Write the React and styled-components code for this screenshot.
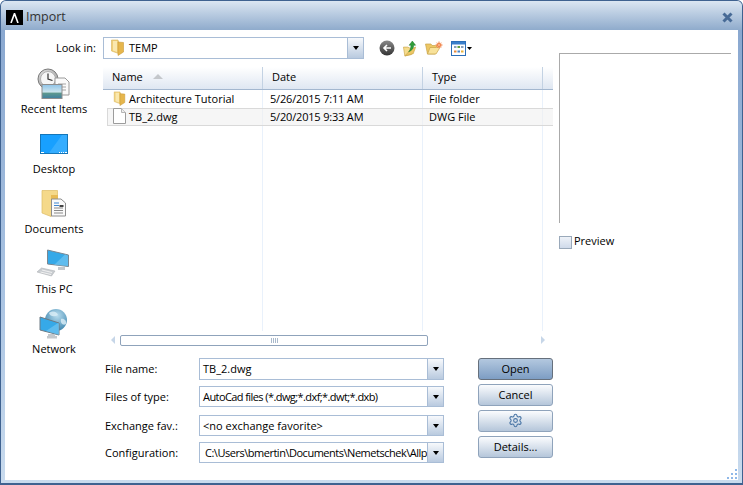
import styled, { createGlobalStyle } from 'styled-components'
import { Settings } from 'lucide-react'

const Global = createGlobalStyle`
  html, body { margin: 0; padding: 0; background: #fff; }
  body { font-family: "Open Sans", "Noto Sans", sans-serif; font-size: 11px; color: #000; }
`
const Window = styled.div`
  position: relative;
  box-sizing: border-box;
  width: 743px;
  height: 485px;
  display: flex;
  flex-direction: column;
  overflow: hidden;
  border: 1px solid #3f6290;
  border-bottom: 2px solid #3f6290;
  border-radius: 6px 6px 0 0;
  background: linear-gradient(#8fabcc 0, #8aa8d0 30px, #a9c3e2 60%, #c9dbee 100%);
`
const TitleBar = styled.div`
  flex: 0 0 29px;
  display: flex;
  align-items: center;
  padding: 0 9px 0 5px;
  background: linear-gradient(#dbe6f2, #8fabcc);
`
const Logo = styled.div`
  width: 17px;
  height: 15px;
  margin-top: 4px;
  background: #000;
  color: #fff;
  display: flex;
  align-items: center;
  justify-content: center;
`
const Title = styled.div`
  margin: 1px 0 0 3px;
  font-size: 12.5px;
  color: #333;
  flex: 1;
`
const Client = styled.div`
  flex: 1;
  min-height: 0;
  margin: 0 4px 3px;
  background: #fff;
  display: flex;
`
const LeftArea = styled.div`
  width: 548px;
  display: flex;
  flex-direction: column;
`
const LookRow = styled.div`
  display: flex;
  align-items: center;
  padding-top: 7px;
  height: 22px;
`
const LookLabel = styled.div`
  width: 91px;
  margin-right: 7px;
  padding-bottom: 2px;
  text-align: right;
`
const Combo = styled.div`
  box-sizing: border-box;
  height: ${(p) => p.$h || 22}px;
  width: ${(p) => p.$w}px;
  display: flex;
  align-items: stretch;
  border: 1px solid #a9bdd6;
  background: #fff;
`
const ComboValue = styled.div`
  flex: 1;
  min-width: 0;
  display: flex;
  align-items: center;
  gap: 5px;
  padding-left: ${(p) => p.$pad || 3}px;
  padding-bottom: 1px;
  letter-spacing: ${(p) => p.$track || 0}px;
  overflow: hidden;
  white-space: nowrap;
`
const DropButton = styled.div`
  flex: 0 0 15px;
  border-left: 1px solid #a9bdd6;
  background: linear-gradient(#f7f9fc, #b9cadf);
  display: flex;
  align-items: center;
  justify-content: center;
`
const Caret = styled.span`
  width: 0;
  height: 0;
  border-left: 3.5px solid transparent;
  border-right: 3.5px solid transparent;
  border-top: 4px solid #000;
`
const Tools = styled.div`
  display: flex;
  align-items: center;
  margin-left: 15px;
  gap: 8px;
`
const Middle = styled.div`
  display: flex;
  height: 280px;
  margin-top: 8px;
`
const Sidebar = styled.div`
  width: 98px;
  display: flex;
  flex-direction: column;
`
const Place = styled.div`
  flex: 0 0 60px;
  display: flex;
  flex-direction: column;
  align-items: center;
`
const PlaceIcon = styled.div`
  height: 34px;
  width: 40px;
  display: flex;
  align-items: center;
  justify-content: center;
`
const PlaceLabel = styled.div`
  line-height: 16px;
`
const ListColumn = styled.div`
  width: 450px;
`
const ListHead = styled.div`
  height: 22px;
  display: flex;
  border-bottom: 1px solid #a3b7cf;
  background: linear-gradient(#fff, #dfe7f2);
`
const HeadCell = styled.div`
  box-sizing: border-box;
  width: ${(p) => p.$w}px;
  display: flex;
  align-items: center;
  gap: 9px;
  padding-left: ${(p) => p.$pad}px;
  padding-bottom: 3px;
  border-right: ${(p) => (p.$last ? 'none' : '1px solid #c3d2e3')};
`
const SortArrow = styled.span`
  width: 0;
  height: 0;
  margin-left: 1px;
  border-left: 5px solid transparent;
  border-right: 5px solid transparent;
  border-bottom: 5px solid #c4c7cb;
`
const ListBody = styled.div`
  height: 241px;
  background:
    linear-gradient(#e9f1fb, #e9f1fb) 159px 0 / 1px 100% no-repeat,
    linear-gradient(#e9f1fb, #e9f1fb) 319px 0 / 1px 100% no-repeat,
    linear-gradient(#e9f1fb, #e9f1fb) 439px 0 / 1px 100% no-repeat;
`
const Row = styled.div`
  box-sizing: border-box;
  height: 18px;
  padding-bottom: 2px;
  display: flex;
  align-items: center;
  margin-left: ${(p) => (p.$selected ? 4 : 0)}px;
  border: 1px solid ${(p) => (p.$selected ? '#d9d9d9' : 'transparent')};
  border-right: none;
  background: ${(p) => (p.$selected ? 'rgba(240,240,240,.6)' : 'transparent')};
`
const NameCell = styled.div`
  width: ${(p) => (p.$selected ? 154 : 158)}px;
  display: flex;
  align-items: center;
  gap: 3px;
  padding-left: ${(p) => (p.$selected ? 5 : 9)}px;
  box-sizing: border-box;
`
const DateCell = styled.div`
  width: 160px;
  padding-left: 8px;
  box-sizing: border-box;
  letter-spacing: -0.18px;
`
const TypeCell = styled.div`
  padding-left: 7px;
`
const ScrollRow = styled.div`
  height: 14px;
  margin-top: 2px;
  display: flex;
  align-items: center;
`
const ScrollArrow = styled.span`
  width: 0;
  height: 0;
  margin-left: ${(p) => p.$ml}px;
  border-top: 4px solid transparent;
  border-bottom: 4px solid transparent;
  ${(p) => (p.$right ? 'border-left: 4px solid #c6d6e8;' : 'border-right: 4px solid #c6d6e8;')}
`
const Thumb = styled.div`
  box-sizing: border-box;
  width: 308px;
  height: 11px;
  margin-left: 5px;
  border: 1px solid #8fa3bb;
  border-radius: 2px;
  display: flex;
  align-items: center;
  justify-content: center;
  gap: 1px;
`
const ThumbLine = styled.span`
  width: 1px;
  height: 5px;
  background: #a9b9cc;
`
const Bottom = styled.div`
  display: flex;
  margin-top: 11px;
  padding-left: 100px;
`
const Form = styled.div`
  width: 339px;
`
const FormRow = styled.div`
  display: flex;
  align-items: center;
  margin-top: ${(p) => p.$top || 0}px;
`
const FieldLabel = styled.div`
  width: 94px;
  flex: none;
  padding-bottom: 1px;
`
const Buttons = styled.div`
  margin-left: 34px;
  display: flex;
  flex-direction: column;
  gap: 4px;
`
const Button = styled.div`
  box-sizing: border-box;
  width: 75px;
  height: 22px;
  padding-bottom: 1px;
  display: flex;
  align-items: center;
  justify-content: center;
  border-radius: 3px;
  border: 1px solid ${(p) => (p.$primary ? '#66707c' : '#8fa3bb')};
  background: ${(p) =>
    p.$primary ? 'linear-gradient(#b3c8df, #7d9dc3)' : 'linear-gradient(#fbfcfe, #b5c6da)'};
`
const PreviewColumn = styled.div`
  padding: 23px 0 0 6px;
`
const PreviewBox = styled.div`
  width: 172px;
  height: 170px;
  box-sizing: border-box;
  border-top: 1px solid #aaa;
  border-left: 1px solid #aaa;
`
const PreviewToggle = styled.div`
  margin-top: 10px;
  display: flex;
  align-items: center;
  gap: 2px;
`
const PreviewLabel = styled.span`
  padding-bottom: 3px;
`
const Check = styled.span`
  box-sizing: border-box;
  width: 13px;
  height: 13px;
  border: 1px solid #9aa9ba;
  background: linear-gradient(#eef2f8, #cfdaea);
`
const Grip = styled.svg`
  position: absolute;
  right: 4px;
  bottom: 3px;
`

const FolderIcon = ({ w = 13, h = 17 }) => (
  <svg width={w} height={h} viewBox="0 0 13 17">
    <path d="M0.5 1 H7 L7.5 2.5 V14.5 L0.5 12 Z" fill="#f0cf78" stroke="#d8b55c" strokeWidth=".6" />
    <path d="M7 3 L12.5 3.5 V13 L7 16.5 Z" fill="#e6b64c" stroke="#c99b3a" strokeWidth=".6" />
    <path d="M2 2 H6 V13 L2 11.5 Z" fill="#fae8ae" />
  </svg>
)

const FileIcon = () => (
  <svg width="13" height="16" viewBox="0 0 13 16">
    <path d="M0.5 0.5 H8.5 L12.5 4.5 V15.5 H0.5 Z" fill="#fff" stroke="#9c9c9c" />
    <path d="M8.5 0.5 V4.5 H12.5" fill="#eee" stroke="#b5b5b5" />
  </svg>
)

const BackIcon = () => (
  <svg width="16" height="16" viewBox="0 0 16 16">
    <defs>
      <linearGradient id="back" x1="0" y1="0" x2="0" y2="1">
        <stop offset="0" stopColor="#8a8a8a" />
        <stop offset="1" stopColor="#333" />
      </linearGradient>
    </defs>
    <circle cx="8" cy="8" r="7.5" fill="url(#back)" />
    <path d="M12 8 H5 M8 5 L5 8 L8 11" fill="none" stroke="#fff" strokeWidth="1.6" />
  </svg>
)

const UpIcon = () => (
  <svg width="14" height="17" viewBox="0 0 15 17">
    <path d="M0.5 7 H5 L9 9 V15 L2 16.5 Z" fill="#f6dc8c" stroke="#c9a548" strokeWidth=".7" />
    <path d="M9 9 L13.5 7 L11 14 L2 16.5 Z" fill="#edc765" stroke="#c9a548" strokeWidth=".7" />
    <path d="M6 12 C8 10 8.5 7 8.5 5 H6.5 L10 0.5 L13.5 5 H11.5 C11.5 8 9.5 11 6 12 Z" fill="#2f9d3a" stroke="#1c7327" strokeWidth=".5" />
  </svg>
)

const NewFolderIcon = () => (
  <svg width="18" height="14" viewBox="0 0 18 14">
    <path d="M0.5 3 H6 L7 4.5 H12 V7 L10 13 H2.5 Z" fill="#edc765" stroke="#c9a548" strokeWidth=".7" />
    <path d="M2.5 13 L5 6.5 H15 L11 13 Z" fill="#f8e29a" stroke="#c9a548" strokeWidth=".7" />
    <circle cx="14" cy="4" r="2.6" fill="#ee6a2c" />
    <path d="M14 0 V8 M10 4 H18 M11.5 1.5 L16.5 6.5 M16.5 1.5 L11.5 6.5" stroke="#f6b48a" strokeWidth=".8" />
  </svg>
)

const ViewIcon = () => (
  <svg width="22" height="15" viewBox="0 0 22 15">
    <rect x="0.5" y="0.5" width="14" height="14" fill="#fff" stroke="#2d6fb8" />
    <rect x="1" y="1" width="13" height="2.5" fill="#3a7fcb" />
    <path d="M3 5 h2.5 v2 H3 Z" fill="#8aa0bb" />
    <path d="M6.5 5 h2.5 v2 H6.5 Z" fill="#63a33f" />
    <path d="M10 5 h2.5 v2 H10 Z" fill="#8aa0bb" />
    <path d="M3 9.5 h2.5 v2 H3 Z" fill="#e98a3a" />
    <path d="M6.5 9.5 h2.5 v2 H6.5 Z" fill="#4a86c8" />
    <path d="M10 9.5 h2.5 v2 H10 Z" fill="#e9b23a" />
    <path d="M16 6 h5 l-2.5 3 Z" fill="#000" />
  </svg>
)

const RecentIcon = () => (
  <svg width="34" height="32" viewBox="0 0 34 32">
    <defs>
      <radialGradient id="clock" cx=".4" cy=".35" r=".8">
        <stop offset="0" stopColor="#f2f2f2" />
        <stop offset="1" stopColor="#8d8d8d" />
      </radialGradient>
      <linearGradient id="photo" x1="0" y1="0" x2="0" y2="1">
        <stop offset="0" stopColor="#8fc4e8" />
        <stop offset=".55" stopColor="#cfe6ee" />
        <stop offset=".6" stopColor="#5f9a8e" />
        <stop offset="1" stopColor="#3f7fa0" />
      </linearGradient>
    </defs>
    <circle cx="11" cy="11" r="10" fill="url(#clock)" stroke="#7b7b7b" />
    <circle cx="11" cy="11" r="7.5" fill="#f6f6f6" stroke="#b0b0b0" />
    <path d="M11 5.5 V11 L15.5 12.5" fill="none" stroke="#333" strokeWidth="1.2" />
    <path d="M18 10 H28 L32 14 V27 H18 Z" fill="#fafafa" stroke="#9a9a9a" />
    <path d="M21 16 H29 M21 19 H29 M21 22 H29" stroke="#a5a5a5" />
    <rect x="5" y="16.5" width="20" height="14" fill="url(#photo)" stroke="#8e8e8e" />
  </svg>
)

const DesktopIcon = () => (
  <svg width="28" height="20" viewBox="0 0 28 20">
    <rect x="0.5" y="0.5" width="27" height="19" fill="#18a0ff" stroke="#1576b8" />
    <path d="M9 19 L22 1 H27 V19 Z" fill="#4ab6ff" opacity=".6" />
    <path d="M1 18.5 H4 M19 18.5 H20 M21 18.5 H22 M23 18.5 H24 M25 18.5 H27" stroke="#fff" />
  </svg>
)

const DocumentsIcon = () => (
  <svg width="26" height="28" viewBox="0 0 26 28">
    <path d="M1 0.5 H16.5 V8 L10 26.5 L1 23 Z" fill="#f5d98a" stroke="#dcbc64" strokeWidth=".7" />
    <path d="M10 5 H17 V24 L10 26.5 Z" fill="#e8bb55" />
    <path d="M10.5 9 H20 L24.5 13 V26 H10.5 Z" fill="#fafafa" stroke="#8e8e8e" />
    <path d="M13 13 H18 M13 15.5 H18" stroke="#3f86d0" />
    <path d="M13 18 H22 M13 20.5 H22 M13 23 H22" stroke="#8a8a8a" />
    <rect x="18.5" y="15" width="4" height="2" fill="#444" />
  </svg>
)

const ComputerIcon = () => (
  <svg width="34" height="30" viewBox="0 0 34 30">
    <path d="M10.5 1 L31.5 6 V17.5 L10.5 15 Z" fill="#36a9e8" stroke="#7b8791" />
    <path d="M17 16 L28 5.5 L31 6.5 V17 Z" fill="#7cc9f2" opacity=".6" />
    <path d="M21 18 H28 V21 H21 Z" fill="#c4c8cc" />
    <path d="M4.5 19 L18 22 L14.5 27 L0 23 Z" fill="#c9cdd1" stroke="#aeb2b6" strokeWidth=".6" />
    <path d="M5 21 L15 23.5 M3.5 23 L14 25.5" stroke="#f1f1f1" />
  </svg>
)

const NetworkIcon = () => (
  <svg width="32" height="30" viewBox="0 0 32 30">
    <defs>
      <radialGradient id="globe" cx=".55" cy=".3" r=".8">
        <stop offset="0" stopColor="#b7dcee" />
        <stop offset="1" stopColor="#2d7aa6" />
      </radialGradient>
    </defs>
    <circle cx="18" cy="11" r="11" fill="url(#globe)" />
    <path d="M11 4 C15 1 19 3 20 6 C17 8 12 8 11 4 Z M23 10 C26 9 29 12 28 15 C25 17 22 14 23 10 Z" fill="#dceff8" opacity=".8" />
    <path d="M2 8 L21 14 V26 L2 21 Z" fill="#36a9e8" stroke="#6d7a84" />
    <path d="M8 22 L20 14 L21 14.5 V26 Z" fill="#7cc9f2" opacity=".6" />
    <path d="M10 25 H17 V27 H19 V29.5 H9 V27 H10 Z" fill="#c4c8cc" />
  </svg>
)

const places = [
  { label: 'Recent Items', icon: <RecentIcon /> },
  { label: 'Desktop', icon: <DesktopIcon /> },
  { label: 'Documents', icon: <DocumentsIcon /> },
  { label: 'This PC', icon: <ComputerIcon /> },
  { label: 'Network', icon: <NetworkIcon /> },
]

const fields = [
  { label: 'File name:', value: 'TB_2.dwg', h: 22, top: 0 },
  { label: 'Files of type:', value: 'AutoCad files (*.dwg;*.dxf;*.dwt;*.dxb)', h: 21, top: 6, track: -0.58 },
  { label: 'Exchange fav.:', value: '<no exchange favorite>', h: 21, top: 8 },
  { label: 'Configuration:', value: 'C:\\Users\\bmertin\\Documents\\Nemetschek\\Allplan', h: 21, top: 6, pad: 5, track: -0.48 },
]

export default function App() {
  return (
    <>
      <Global />
      <Window>
        <TitleBar>
          <Logo>
            <svg width="9" height="10" viewBox="0 0 9 10">
              <path d="M1 10 L4.5 0.5 L8 10" fill="none" stroke="#fff" strokeWidth="1.6" />
            </svg>
          </Logo>
          <Title>Import</Title>
          <svg width="11" height="11" viewBox="0 0 11 11" style={{ marginTop: 4 }}>
            <path d="M1.5 1.5 L9.5 9.5 M9.5 1.5 L1.5 9.5" stroke="#476a96" strokeWidth="3" />
          </svg>
        </TitleBar>
        <Client>
          <LeftArea>
            <LookRow>
              <LookLabel>Look in:</LookLabel>
              <Combo $w={261}>
                <ComboValue $pad={7}>
                  <FolderIcon />
                  TEMP
                </ComboValue>
                <DropButton><Caret /></DropButton>
              </Combo>
              <Tools>
                <BackIcon />
                <UpIcon />
                <NewFolderIcon />
                <ViewIcon />
              </Tools>
            </LookRow>
            <Middle>
              <Sidebar>
                {places.map((p) => (
                  <Place key={p.label}>
                    <PlaceIcon>{p.icon}</PlaceIcon>
                    <PlaceLabel>{p.label}</PlaceLabel>
                  </Place>
                ))}
              </Sidebar>
              <ListColumn>
                <ListHead>
                  <HeadCell $w={160} $pad={9}>Name<SortArrow /></HeadCell>
                  <HeadCell $w={160} $pad={9}>Date</HeadCell>
                  <HeadCell $w={120} $pad={9}>Type</HeadCell>
                  <HeadCell $w={10} $pad={0} $last />
                </ListHead>
                <ListBody>
                  <Row>
                    <NameCell><FolderIcon w={13} h={15} />Architecture Tutorial</NameCell>
                    <DateCell>5/26/2015 7:11 AM</DateCell>
                    <TypeCell>File folder</TypeCell>
                  </Row>
                  <Row $selected>
                    <NameCell $selected><FileIcon />TB_2.dwg</NameCell>
                    <DateCell>5/20/2015 9:33 AM</DateCell>
                    <TypeCell>DWG File</TypeCell>
                  </Row>
                </ListBody>
                <ScrollRow>
                  <ScrollArrow $ml={8} />
                  <Thumb>
                    <ThumbLine /><ThumbLine /><ThumbLine /><ThumbLine />
                  </Thumb>
                  <ScrollArrow $right $ml={113} />
                </ScrollRow>
              </ListColumn>
            </Middle>
            <Bottom>
              <Form>
                {fields.map((f) => (
                  <FormRow key={f.label} $top={f.top}>
                    <FieldLabel>{f.label}</FieldLabel>
                    <Combo $w={245} $h={f.h}>
                      <ComboValue $pad={f.pad} $track={f.track}>{f.value}</ComboValue>
                      <DropButton><Caret /></DropButton>
                    </Combo>
                  </FormRow>
                ))}
              </Form>
              <Buttons>
                <Button $primary>Open</Button>
                <Button>Cancel</Button>
                <Button><Settings size={15} color="#4a76a6" strokeWidth={1.7} /></Button>
                <Button>Details...</Button>
              </Buttons>
            </Bottom>
          </LeftArea>
          <PreviewColumn>
            <PreviewBox />
            <PreviewToggle>
              <Check />
              <PreviewLabel>Preview</PreviewLabel>
            </PreviewToggle>
          </PreviewColumn>
        </Client>
        <Grip width="12" height="12" viewBox="0 0 12 12" fill="#8fb8e8">
          <rect x="9" y="1" width="2" height="2" />
          <rect x="5" y="5" width="2" height="2" />
          <rect x="9" y="5" width="2" height="2" />
          <rect x="1" y="9" width="2" height="2" />
          <rect x="5" y="9" width="2" height="2" />
          <rect x="9" y="9" width="2" height="2" />
        </Grip>
      </Window>
    </>
  )
}
